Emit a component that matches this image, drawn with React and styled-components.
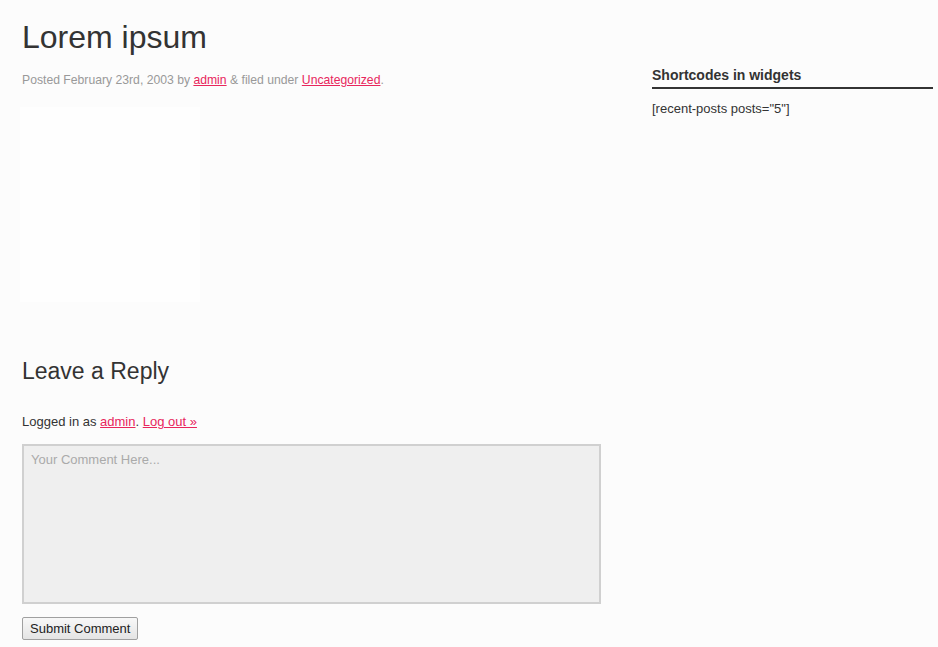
import React from 'react'
import styled, { createGlobalStyle } from 'styled-components'

const GlobalStyle = createGlobalStyle`
  html, body {
    margin: 0;
    padding: 0;
    background: #fcfcfc;
  }
  body {
    font-family: "Liberation Sans", Arial, sans-serif;
    color: #333;
  }
`

const Page = styled.div`
  display: grid;
  grid-template-columns: 580px 281px;
  column-gap: 50px;
  padding: 0 0 0 22px;
  width: 938px;
  box-sizing: border-box;
`

const Main = styled.main`
  display: flex;
  flex-direction: column;
`

const Sidebar = styled.aside`
  padding-top: 67px;
`

const Title = styled.h1`
  margin: 18px 0 0;
  font-size: 32px;
  font-weight: normal;
  line-height: 38px;
  color: #333;
`

const Meta = styled.p`
  margin: 17px 0 0;
  font-size: 12.2px;
  line-height: 14px;
  color: #999;
`

const Link = styled.a`
  color: #e8265c;
  text-decoration: underline;
`

const MediaBox = styled.div`
  margin: 20px 0 0 -2px;
  width: 180px;
  height: 195px;
  background: #fefefe;
`

const ReplyTitle = styled.h3`
  margin: 55px 0 0;
  font-size: 23px;
  font-weight: normal;
  line-height: 28px;
  color: #333;
`

const LoggedIn = styled.p`
  margin: 29px 0 0;
  font-size: 13px;
  line-height: 16px;
  color: #333;
`

const CommentBox = styled.textarea`
  margin: 14px 0 0;
  width: 579px;
  height: 160px;
  box-sizing: border-box;
  border: 2px solid #d0d0d0;
  background: #efefef;
  padding: 6px 7px;
  font-family: "Liberation Sans", Arial, sans-serif;
  font-size: 13px;
  color: #333;
  resize: none;

  &::placeholder {
    color: #aaa;
  }
`

const SubmitButton = styled.button`
  margin-top: 13px;
  align-self: flex-start;
  height: 23px;
  padding: 0 7px;
  font-family: "Liberation Sans", Arial, sans-serif;
  font-size: 13px;
  color: #222;
  background: linear-gradient(#f8f8f8, #e4e4e4);
  border: 1px solid #a0a0a0;
  border-radius: 2px;
`

const WidgetTitle = styled.h4`
  margin: 0;
  padding-bottom: 3px;
  border-bottom: 2px solid #333;
  font-size: 14px;
  font-weight: bold;
  line-height: 17px;
  color: #333;
`

const WidgetBody = styled.p`
  margin: 12px 0 0;
  font-size: 13px;
  line-height: 16px;
  color: #333;
`

export default function App() {
  return (
    <>
      <GlobalStyle />
      <Page>
        <Main>
          <Title>Lorem ipsum</Title>
          <Meta>
            Posted February 23rd, 2003 by <Link href="#">admin</Link> &amp; filed under{' '}
            <Link href="#">Uncategorized</Link>.
          </Meta>
          <MediaBox />
          <ReplyTitle>Leave a Reply</ReplyTitle>
          <LoggedIn>
            Logged in as <Link href="#">admin</Link>. <Link href="#">Log out »</Link>
          </LoggedIn>
          <CommentBox placeholder="Your Comment Here..." />
          <SubmitButton>Submit Comment</SubmitButton>
        </Main>
        <Sidebar>
          <WidgetTitle>Shortcodes in widgets</WidgetTitle>
          <WidgetBody>[recent-posts posts="5"]</WidgetBody>
        </Sidebar>
      </Page>
    </>
  )
}
